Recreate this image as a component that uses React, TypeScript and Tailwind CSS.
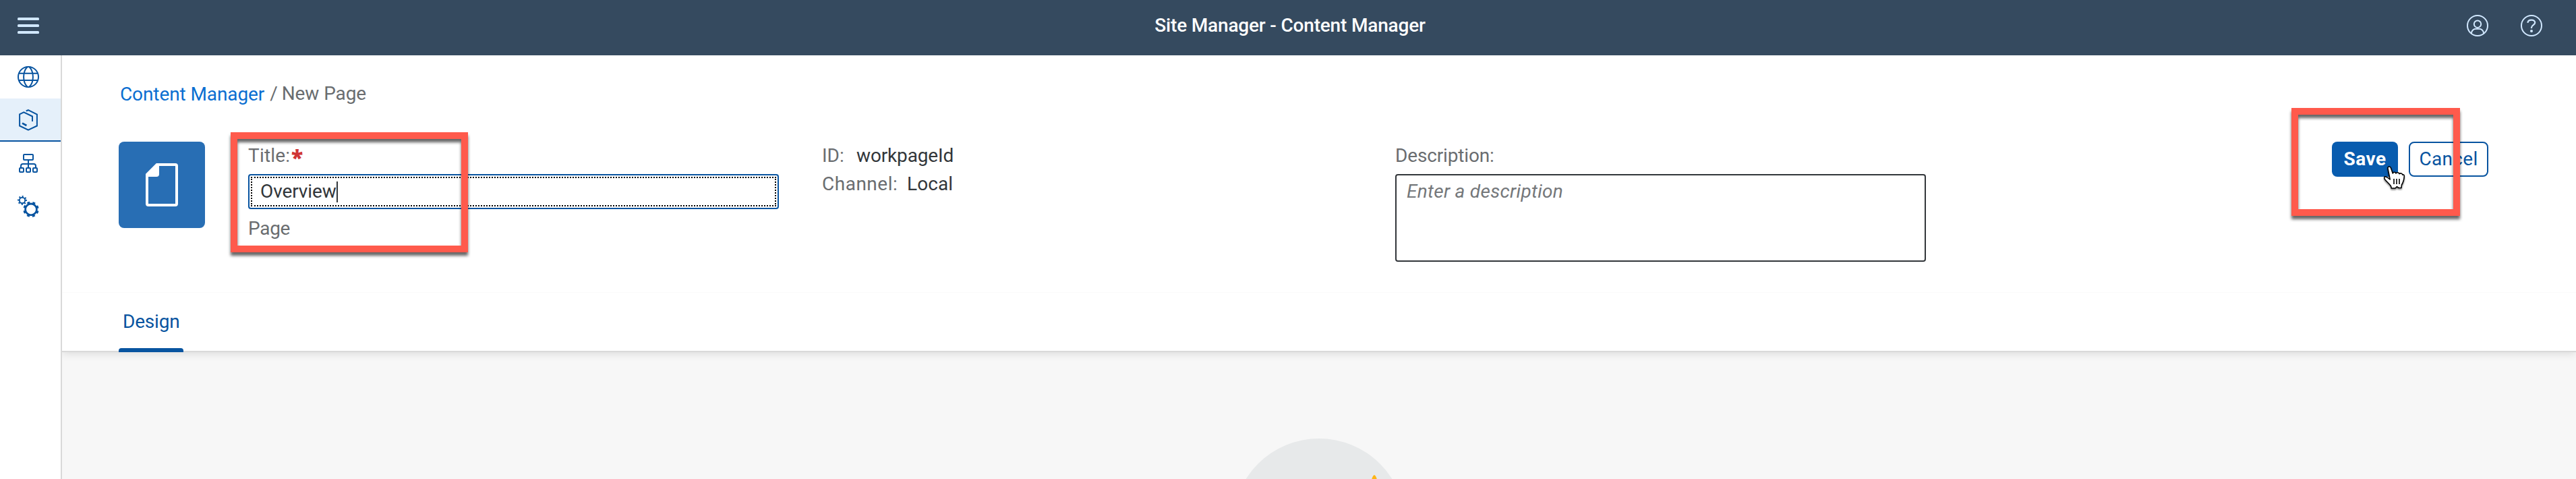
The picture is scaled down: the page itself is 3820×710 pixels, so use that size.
import type { ReactNode } from "react";

function MenuIcon() {
  return (
    <svg width="32" height="24" viewBox="0 0 32 24" fill="#d1e8ff">
      <rect width="32" height="4" rx="1.5" />
      <rect y="10" width="32" height="4" rx="1.5" />
      <rect y="20" width="32" height="4" rx="1.5" />
    </svg>
  );
}

function UserIcon() {
  return (
    <svg width="32" height="32" viewBox="0 0 32 32" fill="none" stroke="#d1e8ff" strokeWidth="2">
      <circle cx="16" cy="16" r="15" />
      <circle cx="16" cy="13.7" r="5.2" />
      <path d="M7 28V27C7 23 10.5 20.8 13.5 20.8H18.5C21.5 20.8 25 23 25 27V28" />
    </svg>
  );
}

function HelpIcon() {
  return (
    <svg width="32" height="32" viewBox="0 0 32 32" fill="none" stroke="#d1e8ff" strokeWidth="2">
      <circle cx="16" cy="16" r="15" />
      <path d="M10.4 11.8C10.6 9 13 7.6 16 7.6C19 7.6 21.2 9.2 21.2 11.6C21.2 15 16 15.4 16 18.8V20" strokeWidth="2.2" />
      <circle cx="16" cy="24" r="2" fill="#d1e8ff" stroke="none" />
    </svg>
  );
}

function GlobeIcon() {
  return (
    <svg width="32" height="32" viewBox="0 0 32 32" fill="none" stroke="#0854a0" strokeWidth="2">
      <circle cx="16" cy="16" r="15" />
      <path d="M14.5 1.2C7.3 8.5 7.3 23.5 14.5 30.8M17.5 1.2C24.7 8.5 24.7 23.5 17.5 30.8M2 10.8H30M2 21H30" />
    </svg>
  );
}

function CubeIcon() {
  return (
    <svg width="32" height="32" viewBox="0 0 32 32" fill="none" stroke="#0854a0" strokeWidth="2">
      <path d="M12.7 2.5L15.9 1.2L28.9 7.6V24.5L15.9 30.7L3.1 24.5V7.3L9.3 4.4L22 10.5V18" />
      <path d="M7 20.7L13.4 24" strokeWidth="2.6" />
    </svg>
  );
}

function TreeIcon() {
  return (
    <svg width="32" height="32" viewBox="0 0 32 32" fill="none" stroke="#0854a0" strokeWidth="2">
      <rect x="9" y="3" width="14" height="8" rx="1" />
      <path d="M16 11V23M5 23V20C5 18 6 17 8 17H24C26 17 27 18 27 20V23" />
      <rect x="3" y="23" width="6" height="6" rx="1" />
      <rect x="13" y="23" width="6" height="6" rx="1" />
      <rect x="23" y="23" width="6" height="6" rx="1" />
    </svg>
  );
}

function GearsIcon() {
  return (
    <svg width="32" height="32" viewBox="0 0 32 32" fill="none" stroke="#0854a0">
      <circle cx="20" cy="20.4" r="8.4" strokeWidth="2.8" />
      <circle cx="20" cy="20.4" r="10.3" strokeWidth="2.8" strokeDasharray="4 4.09" transform="rotate(11.4 20 20.4)" />
      <circle cx="7" cy="7" r="4.2" strokeWidth="1.9" />
      <circle cx="7" cy="7" r="5.8" strokeWidth="2.4" strokeDasharray="1.9 2.655" transform="rotate(-9.4 7 7)" />
    </svg>
  );
}

function PageIcon() {
  return (
    <svg width="48" height="64" viewBox="0 0 48 64">
      <path d="M17 2H44Q46 2 46 4V60Q46 62 44 62H4Q2 62 2 60V17Z" fill="none" stroke="#fff" strokeWidth="4" />
      <path d="M16 0H20V16Q20 20 16 20H0V16Z" fill="#fff" />
    </svg>
  );
}

function HandPointer() {
  return (
    <svg
      className="absolute left-[3534px] top-[246px] overflow-visible drop-shadow-[0_2px_1px_rgba(0,0,0,0.45)]"
      width="34"
      height="36"
      viewBox="0 0 34 36"
      fill="none"
      stroke="#000"
      strokeWidth="1.6"
      strokeLinejoin="round"
    >
      <path
        d="M7 4C6.2 .6 10.3 0 11.4 2.8L14.3 11C14.9 8.6 18.5 8.7 19 11C20 9.1 23.5 9.4 24 11.7C25.5 10.2 28.3 10.7 28.8 13.2C30.5 12.4 31.4 13.4 31.3 15.4C31 21 30 24 27.5 28L27 32.5H23L20.5 30.7L18 33H12.3L11.5 30C9 26 6 24 3.4 21C.8 18 1.2 15.3 4 16C6 16.5 8 18 10.2 20Z"
        fill="#fff"
      />
      <path d="M16 19V27M20 19V27M24 19V27" />
    </svg>
  );
}

function NavItem({ active, children }: { active?: boolean; children: ReactNode }) {
  return (
    <a
      className={
        active
          ? "flex h-16 items-center border-b-2 border-[#0854a0] bg-[#e5f0fa] pt-0.5 pl-[26px]"
          : "flex h-16 items-center pl-[26px]"
      }
    >
      {children}
    </a>
  );
}

export default function App() {
  return (
    <div className="relative flex h-[710px] w-[3820px] flex-col overflow-hidden bg-white font-['Roboto',sans-serif] text-[28px] leading-[42px] whitespace-nowrap text-[#32363a]">
      <header className="grid h-[82px] shrink-0 grid-cols-3 items-start bg-[#354a5f]">
        <div className="pt-[26px] pl-[26px]">
          <MenuIcon />
        </div>
        <h1 className="pt-[17px] pl-1.5 text-center font-medium tracking-[-0.18px] text-white">
          Site Manager - Content Manager
        </h1>
        <div className="flex justify-end gap-12 pt-[22px] pr-[50px]">
          <UserIcon />
          <HelpIcon />
        </div>
      </header>

      <div className="flex min-h-0 flex-1">
        <nav className="w-[92px] shrink-0 border-r-2 border-[#d9d9d9] bg-white">
          <NavItem>
            <GlobeIcon />
          </NavItem>
          <NavItem active>
            <CubeIcon />
          </NavItem>
          <NavItem>
            <TreeIcon />
          </NavItem>
          <NavItem>
            <GearsIcon />
          </NavItem>
        </nav>

        <main className="flex min-w-0 flex-1 flex-col">
          <section className="h-[352px] shrink-0 border-b border-[#fafafa] pt-9 pl-21">
            <div className="flex h-[42px] pl-0.5 text-[#6a6d70]">
              <a className="pt-px tracking-[-0.1px] text-[#0a6ed1]">Content Manager</a>
              <span className="pl-2">/</span>
              <span className="pl-1.5 tracking-[-0.1px]">New Page</span>
            </div>

            <div className="mt-[50px] flex">
              <div className="flex size-32 items-center justify-center rounded-lg bg-[#286eb4]">
                <PageIcon />
              </div>

              <div className="ml-16 w-[787px] text-[#6a6d70]">
                <div className="flex h-[42px]">
                  <span className="w-16 tracking-[0.2px]">Title:</span>
                  <span className="pt-0.5 font-['Open_Sans',sans-serif] text-[32px] font-extrabold text-[#d03535]">
                    *
                  </span>
                </div>
                <div className="mt-1.5 h-[52px] rounded-sm border-2 border-[#0854a0] p-0.5">
                  <div className="flex h-full items-center border-2 border-dotted border-black pl-3 text-[#32363a]">
                    <span className="tracking-[-0.1px]">Overview</span>
                    <span className="h-[31px] w-0.5 bg-[#32363a]" />
                  </div>
                </div>
                <div className="mt-2 tracking-[-0.3px]">Page</div>
              </div>

              <div className="ml-16 flex w-[850px] flex-col">
                <div className="flex">
                  <span className="w-[51px] text-[#6a6d70]">ID:</span>
                  <span className="tracking-[-0.15px]">workpageId</span>
                </div>
                <div className="flex">
                  <span className="w-[126px] tracking-[0.5px] text-[#6a6d70]">Channel:</span>
                  <span className="tracking-[0.1px]">Local</span>
                </div>
              </div>

              <div className="w-[787px]">
                <div className="tracking-[-0.15px] text-[#6a6d70]">Description:</div>
                <div className="mt-1.5 h-[130px] rounded-sm border-2 border-[#32363a] pt-[3px] pl-[15px] tracking-[0.3px] text-[#74777a] italic">
                  Enter a description
                </div>
              </div>

              <div className="ml-[602px] flex gap-4">
                <button className="h-[52px] w-[98px] rounded-lg bg-[#085caf] pb-px font-bold tracking-[0.5px] text-white">
                  Save
                </button>
                <button className="h-[52px] w-[118px] rounded-lg border-2 border-[#0854a0] pb-px tracking-[0.3px] text-[#0854a0]">
                  Cancel
                </button>
              </div>
            </div>
          </section>

          <section className="z-10 flex h-[88px] shrink-0 items-end border-b-2 border-[#d9d9d9] bg-white pl-21 shadow-[0_2px_12px_rgba(0,0,0,0.12)] [clip-path:inset(0_0_-20px_0)]">
            <div className="-mb-0.5 flex w-24 flex-col">
              <span className="pb-[18px] pl-1.5 tracking-[-0.2px] text-[#0854a0]">Design</span>
              <span className="h-1.5 rounded-t bg-[#0854a0]" />
            </div>
          </section>

          <section className="flex min-h-0 flex-1 justify-center overflow-hidden bg-[#f7f7f7] pt-32">
            <div className="relative size-64 shrink-0 rounded-full bg-[#e7e9ea]">
              <svg className="absolute top-[54px] left-[206px]" width="8" height="14" viewBox="0 0 8 14">
                <path d="M4 0Q6.5 1 8 7V14H0V7Q1.500 1 4 0Z" fill="#fdb515" />
              </svg>
            </div>
          </section>
        </main>
      </div>

      <div className="absolute top-[196px] left-[342px] h-[178px] w-[352px] border-[10px] border-[#ff5a4c] drop-shadow-[0_5px_2px_rgba(0,0,0,0.6)]" />
      <div className="absolute top-[160px] left-[3398px] h-[160px] w-[250px] border-[10px] border-[#ff5a4c] drop-shadow-[0_5px_2px_rgba(0,0,0,0.6)]" />
      <HandPointer />
    </div>
  );
}
